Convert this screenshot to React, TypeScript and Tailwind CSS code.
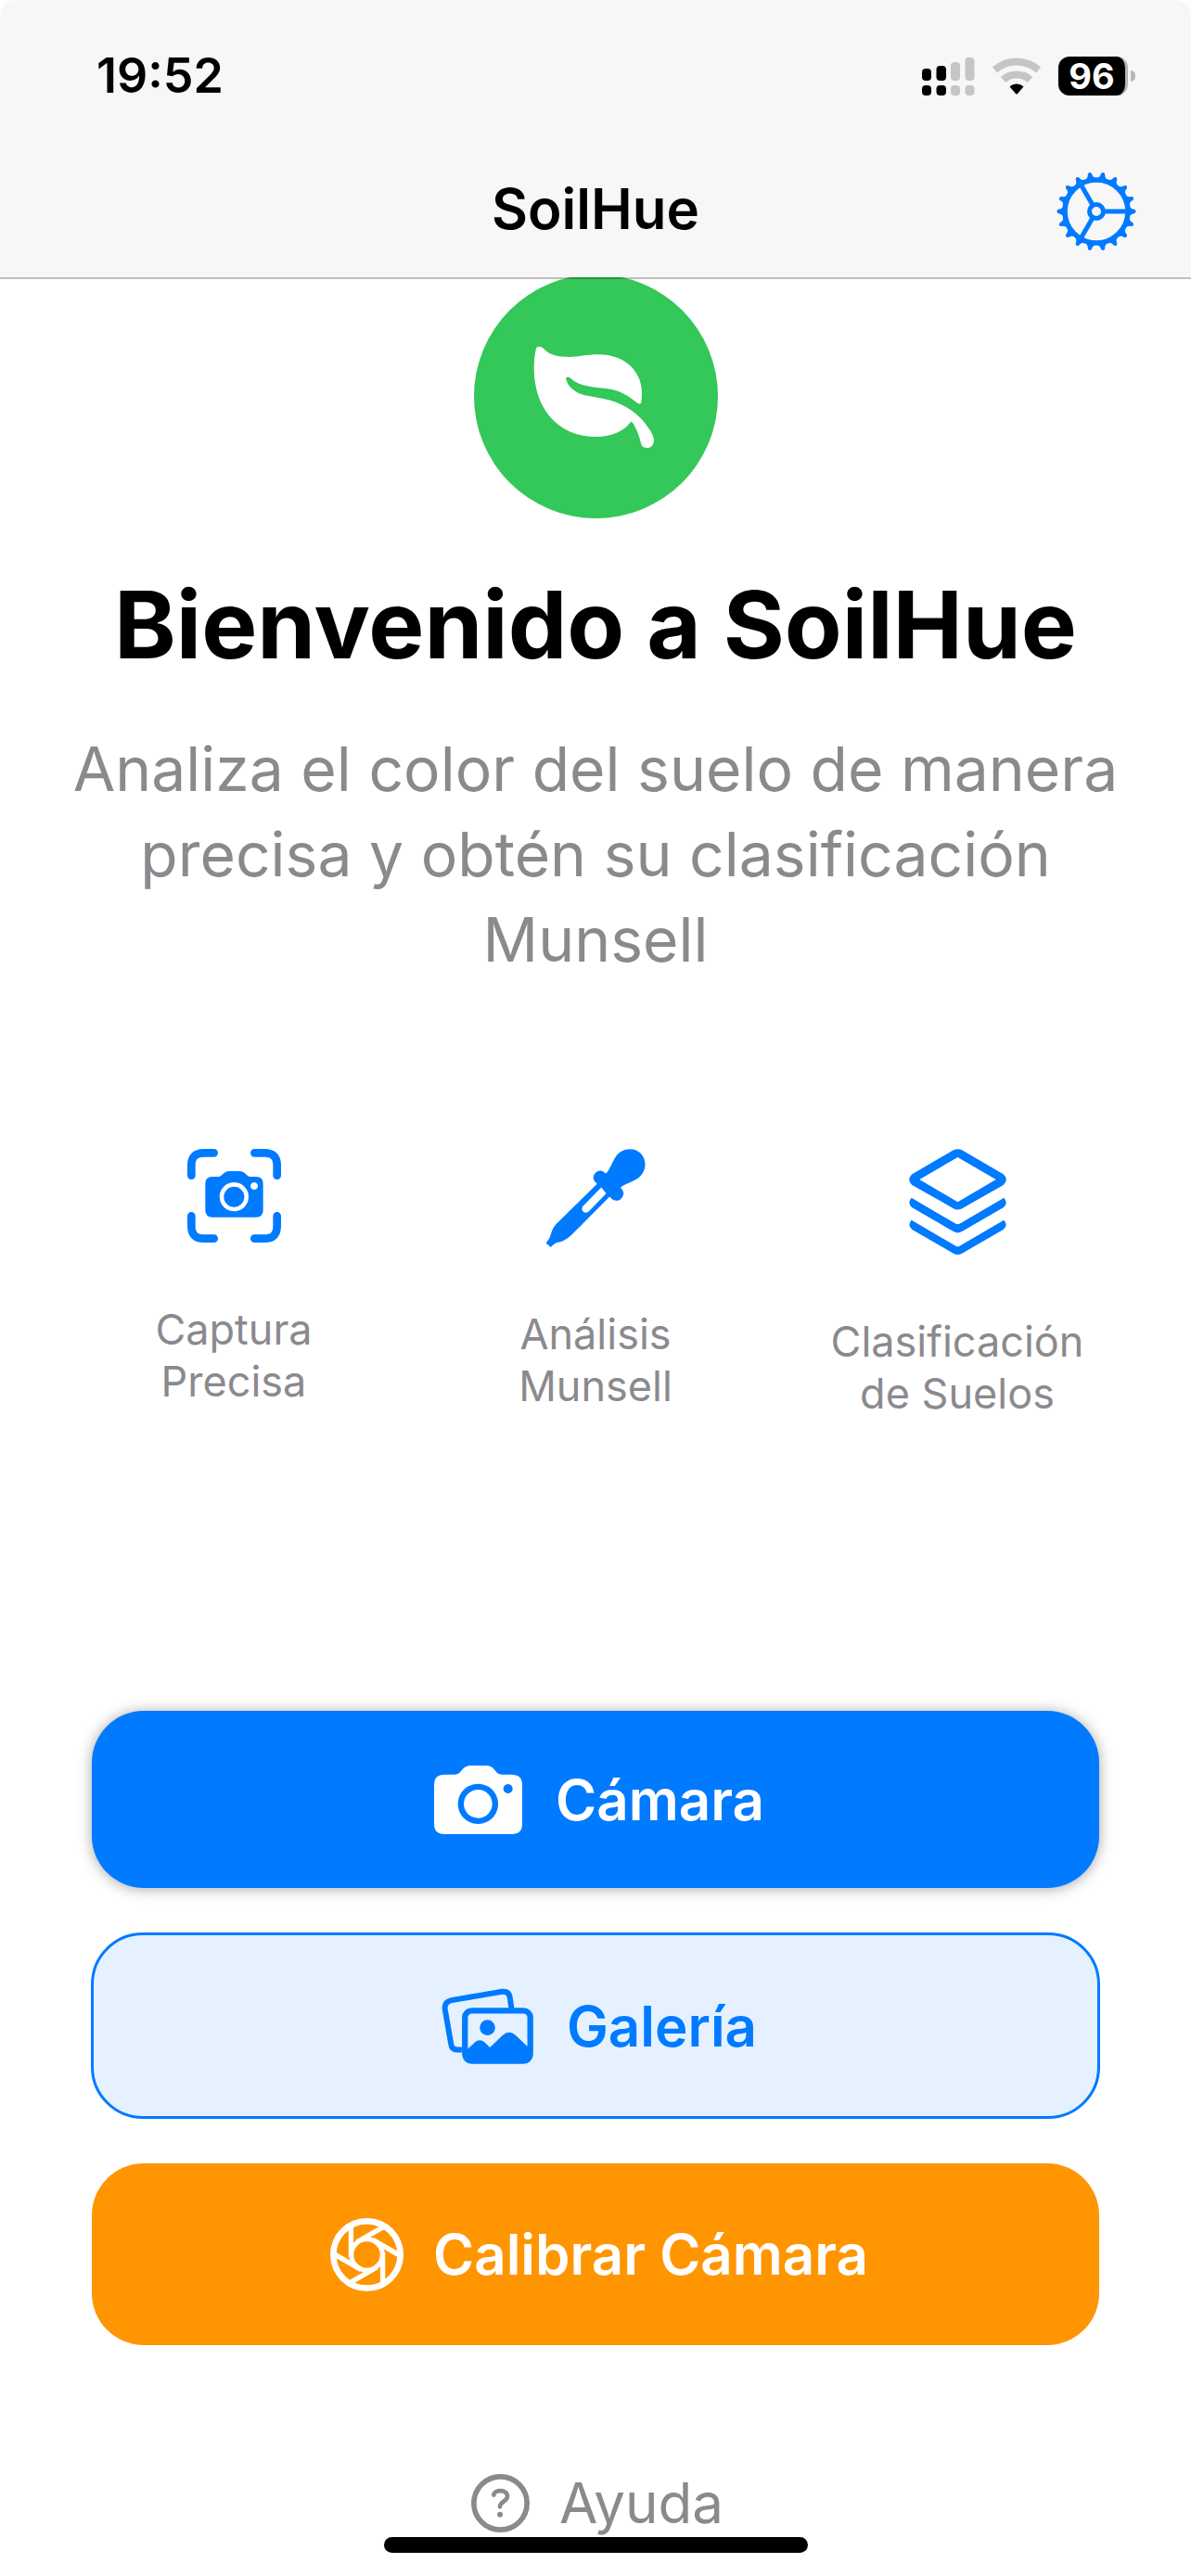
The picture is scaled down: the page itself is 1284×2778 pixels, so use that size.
import type { ReactNode } from "react";

const TEETH = Array.from({ length: 18 }, (_, i) => i * 20);

function GearIcon() {
  return (
    <svg viewBox="-43 -43 86 86" className="size-[86px]" fill="none" stroke="currentColor" aria-hidden="true">
      <circle r="34" strokeWidth="5.5" />
      <circle r="7.5" strokeWidth="5" />
      {[0, 120, 240].map((a) => (
        <path key={a} d="M9 0H33" strokeWidth="5" transform={`rotate(${a})`} />
      ))}
      {TEETH.map((a) => (
        <path
          key={a}
          d="M34 -6 C37 -5 37 -2.6 40 -2.4 C43.4 -1.8 43.4 1.8 40 2.4 C37 2.6 37 5 34 6Z"
          fill="currentColor"
          stroke="none"
          transform={`rotate(${a})`}
        />
      ))}
    </svg>
  );
}

function SignalIcon() {
  return (
    <svg viewBox="0 0 57 42" className="h-[42px] w-[57px]" aria-hidden="true">
      <g fill="#000">
        <rect x="0" y="13" width="10" height="13" rx="4" />
        <rect x="15.500" y="10" width="10.500" height="16" rx="4" />
        <rect x="0" y="31" width="10" height="11" rx="4" />
        <rect x="15.500" y="31" width="10.500" height="11" rx="4" />
      </g>
      <g fill="#c5c5c5">
        <rect x="31" y="6" width="10" height="20" rx="4" />
        <rect x="46.500" y="1" width="10" height="25" rx="4" />
        <rect x="31" y="31" width="10" height="11" rx="4" />
        <rect x="46.500" y="31" width="10" height="11" rx="4" />
      </g>
    </svg>
  );
}

function WifiIcon() {
  return (
    <svg viewBox="0 0 54 40" className="h-10 w-[54px]" aria-hidden="true">
      <path d="M3.500 13.500C17 1.500 37 1.500 50.500 13.500" fill="none" stroke="#c5c5c5" strokeWidth="8" />
      <path d="M12.500 24C20.500 16.800 33.500 16.800 41.500 24" fill="none" stroke="#c5c5c5" strokeWidth="8" />
      <path d="M19.500 31.500C23.500 27.500 30.500 27.500 34.500 31.500L28 39Q27 40 26 39Z" fill="#000" />
    </svg>
  );
}

function LeafIcon() {
  return (
    <svg viewBox="254 280 392 334" className="h-[111px] w-[131px]" aria-hidden="true">
      <path
        fill="#fff"
        d="M261 291C262 281 276 279 284 287C299 303 318 316 370 316C400 316 425 308 465 308C535 308 582 346 597 389C606 415 606 435 603 462C602 470 594 470 587 463C561 441 530 424 500 420C455 414 405 415 372 384C364 377 356 381 360 392C366 410 385 432 420 440C465 449 505 452 545 474C585 494 612 522 634 558C646 578 647 592 638 604C629 614 609 613 604 602C598 580 590 550 574 528C572 525 569 526 567 529C545 558 505 575 456 575C340 575 255 490 255 352C255 330 257 310 261 291Z"
      />
    </svg>
  );
}

function ScanCameraIcon() {
  return (
    <svg viewBox="66 90 303 303" className="size-[101px]" aria-hidden="true">
      <g fill="none" stroke="currentColor" strokeWidth="26" strokeLinecap="round">
        <path d="M79 176V143Q79 103 119 103H152M283 103H316Q356 103 356 143V176M356 307V340Q356 380 316 380H283M152 380H119Q79 380 79 340V307" />
      </g>
      <path
        fill="currentColor"
        fillRule="evenodd"
        d="M147 180H166C180 180 181 162 202 162H234C255 162 256 180 270 180H288Q311 180 311 203V288Q311 311 288 311H147Q124 311 124 288V203Q124 180 147 180ZM217 198a47 47 0 1 0 .1 0ZM282 198a12 12 0 1 0 .1 0Z"
      />
      <circle cx="217" cy="245" r="33" fill="currentColor" />
    </svg>
  );
}

function EyedropperIcon() {
  return (
    <svg viewBox="54 84 324 321" className="h-[106px] w-[108px]" aria-hidden="true">
      <path
        fill="currentColor"
        fillRule="evenodd"
        d="M251 164C270 140 275 110 295 95C320 78 350 83 365 100C382 120 382 148 367 167C348 192 318 193 298 210L303 217C312 229 306 240 298 248C289 255 276 254 268 246L262 240L160 343C140 362 128 378 108 385C92 389 84 391 76 399L70 405L54 391L62 381C72 369 69 350 87 330L221 198L214 191C206 182 208 170 216 162C225 153 237 153 245 161ZM235 210L175 271C165 284 180 298 193 289L251 229Z"
      />
    </svg>
  );
}

function LayersIcon() {
  return (
    <svg viewBox="56 56 316 343" className="h-[114px] w-[105px]" fill="currentColor" aria-hidden="true">
      <path
        fillRule="evenodd"
        d="M200 60Q214 53 228 60L362 138Q381 155 362 173L228 249Q214 257 200 249L66 173Q47 155 66 138ZM214 83L90 155L214 228L338 155Z"
      />
      <path d="M64 215L208 299Q214 302 220 299L364 215Q379 232 362 246L228 324Q214 332 200 324L66 246Q49 232 64 215Z" />
      <path d="M64 287L208 371Q214 374 220 371L364 287Q379 304 362 318L228 395Q214 403 200 395L66 318Q49 304 64 287Z" />
    </svg>
  );
}

function CameraIcon() {
  return (
    <svg viewBox="86 69 285 222" className="h-[74px] w-[95px]" fill="currentColor" aria-hidden="true">
      <path
        fillRule="evenodd"
        d="M120 98H152C178 98 172 69 206 69H254C286 69 280 98 306 98H336Q371 98 371 131V258Q371 291 336 291H120Q86 291 86 258V131Q86 98 120 98ZM228 128a65 65 0 1 0 .1 0ZM325 129a15 15 0 1 0 .1 0Z"
      />
      <circle cx="228" cy="193" r="46" />
    </svg>
  );
}

function GalleryIcon() {
  return (
    <svg viewBox="110 70 298 246" className="h-[82px] w-[99px]" aria-hidden="true">
      <path
        d="M176 270H162Q143 270 141 252L121 137Q119 114 142 109L307 81Q329 79 332 100L337 136"
        fill="none"
        stroke="currentColor"
        strokeWidth="18"
      />
      <rect x="186" y="143" width="212" height="163" rx="22" fill="none" stroke="currentColor" strokeWidth="19" />
      <circle cx="259" cy="198" r="25" fill="currentColor" />
      <path
        fill="currentColor"
        d="M190 272L218 246Q234 232 250 246L267 262L308 223Q329 204 351 223L394 264V300H190Z"
      />
    </svg>
  );
}

function ApertureIcon() {
  return (
    <svg viewBox="-118 -118 236 236" className="size-[79px]" fill="none" stroke="currentColor" aria-hidden="true">
      <circle r="108" strokeWidth="20" />
      <circle r="50" strokeWidth="15" />
      {[0, 60, 120, 180, 240, 300].map((a) => (
        <path key={a} d="M-51 8V-92" strokeWidth="16" transform={`rotate(${a})`} />
      ))}
    </svg>
  );
}

function HelpIcon() {
  return (
    <svg viewBox="333 78 189 189" className="size-[63px]" fill="none" stroke="currentColor" aria-hidden="true">
      <circle cx="427.500" cy="172.500" r="86" strokeWidth="17" />
      <path
        d="M406 146C407 128 450 126 450 150C450 167 426 166 426 184"
        strokeWidth="14"
        strokeLinecap="round"
        strokeLinejoin="round"
      />
      <circle cx="426" cy="209" r="9" fill="currentColor" stroke="none" />
    </svg>
  );
}

function Feature({ icon, lines }: { icon: ReactNode; lines: [string, string] }) {
  return (
    <li className="flex flex-col items-center gap-[66px] text-center">
      <span className="text-[#007aff]">{icon}</span>
      <span className="text-[45px] leading-[56px] text-[#8a8a8e]">
        {lines[0]}
        <br />
        {lines[1]}
      </span>
    </li>
  );
}

export default function App() {
  return (
    <div className="flex min-h-screen flex-col bg-white font-['Inter',sans-serif] text-black">
      <header className="relative z-10 rounded-t-2xl border-b-2 border-black/25 bg-[#f7f7f7] bg-clip-padding">
        <div className="flex h-[164px] items-center justify-between pr-[60px] pl-[104px]">
          <time className="text-[52px] font-semibold">19:52</time>
          <div className="flex items-center gap-[18px]">
            <SignalIcon />
            <WifiIcon />
            <div className="flex items-center gap-[3px]">
              <div className="flex h-[42px] w-[75px] items-center justify-center rounded-xl border-r-3 border-[#b5b5b5] bg-black text-[38px] leading-none font-bold text-white">
                96
              </div>
              <div className="h-3 w-[5px] rounded-r-full bg-[#b5b5b5]" />
            </div>
          </div>
        </div>
        <div className="grid h-[135px] grid-cols-[1fr_auto_1fr] items-start px-[59px]">
          <h1 className="col-start-2 pt-[25px] text-[60px] leading-[72px] font-semibold">SoilHue</h1>
          <button type="button" aria-label="Ajustes" className="mt-[21px] justify-self-end text-[#007aff]">
            <GearIcon />
          </button>
        </div>
      </header>

      <main className="-mt-[5px] flex flex-col">
        <div className="flex size-[263px] items-center justify-center self-center rounded-full bg-[#34c759] pt-0.5 pr-1">
          <LeafIcon />
        </div>
        <h2 className="mt-[54px] text-center text-[101px] leading-[120px] font-bold">Bienvenido a SoilHue</h2>
        <p className="mt-[50px] px-16 text-center text-[66px] leading-[92px] text-[#8a8a8e]">
          Analiza el color del suelo de manera precisa y obtén su clasificación Munsell
        </p>

        <ul className="mt-[180px] grid grid-cols-3 px-[57px]">
          <Feature icon={<ScanCameraIcon />} lines={["Captura", "Precisa"]} />
          <Feature icon={<EyedropperIcon />} lines={["Análisis", "Munsell"]} />
          <Feature icon={<LayersIcon />} lines={["Clasificación", "de Suelos"]} />
        </ul>

        <div className="mt-[314px] flex flex-col gap-12 px-[99px] text-[60px] font-semibold">
          <button
            type="button"
            className="flex h-[191px] items-center justify-center gap-9 rounded-[56px] bg-[#007aff] pl-2 text-white shadow-[0_1px_15px_rgba(0,0,0,0.35)]"
          >
            <CameraIcon />
            Cámara
          </button>
          <button
            type="button"
            className="-mx-px flex h-[201px] items-center justify-center gap-9 rounded-[56px] border-3 border-[#007aff] bg-[#e5f1ff] pl-2 text-[#007aff]"
          >
            <GalleryIcon />
            Galería
          </button>
          <button
            type="button"
            className="flex h-[196px] items-center justify-center gap-8 rounded-[56px] bg-[#ff9500] pl-2 text-white"
          >
            <ApertureIcon />
            Calibrar Cámara
          </button>
        </div>

        <button
          type="button"
          className="mt-[130px] flex items-center gap-8 self-center pl-1 text-[60px] leading-[80px] text-[#8a8a8e]"
        >
          <HelpIcon />
          Ayuda
        </button>
      </main>
      <div className="relative mx-auto -mt-[3px] h-[17px] w-[457px] rounded-full bg-black" />
    </div>
  );
}
